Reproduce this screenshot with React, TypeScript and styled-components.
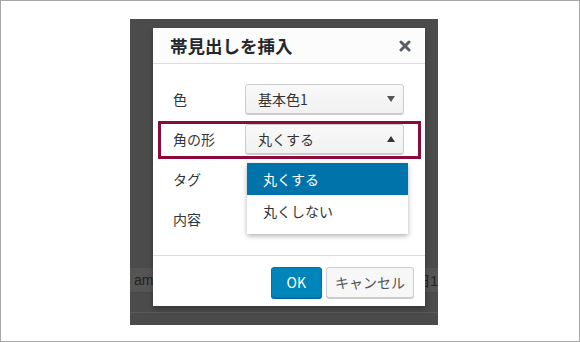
import styled, { createGlobalStyle } from "styled-components";

const GlobalStyle = createGlobalStyle`
    html, body {
        margin: 0;
        padding: 0;
        background: #ffffff;
    }
    body {
        font-family: "Noto Sans CJK JP", "Noto Sans", sans-serif;
    }
`;

const Frame = styled.div`
    box-sizing: border-box;
    width: 580px;
    height: 342px;
    border: 1px solid #a8a8a8;
    background: #ffffff;
    padding: 18px 0 0 129px;
`;

const Backdrop = styled.div`
    position: relative;
    width: 308px;
    height: 306px;
    background: #4b4b4b;
    display: flex;
    flex-direction: column;
    padding-top: 249px;
    box-sizing: border-box;
`;

const PageStrip = styled.div`
    height: 24px;
    background: #555555;
    border-bottom: 1px solid #474747;
    display: flex;
    align-items: center;
    justify-content: space-between;
    font-family: "Liberation Sans", "Noto Sans CJK JP", sans-serif;
    font-size: 14px;
    color: #222222;
`;

const PageLine = styled.div`
    margin-top: 19px;
    height: 1px;
    background: #5a5a5a;
`;

const Dialog = styled.div`
    position: absolute;
    left: 23px;
    top: 9px;
    width: 272px;
    height: 278px;
    background: #ffffff;
    box-shadow: 0 3px 6px rgba(0, 0, 0, 0.3);
    display: flex;
    flex-direction: column;
`;

const Header = styled.div`
    height: 36px;
    box-sizing: border-box;
    background: #fcfcfc;
    border-bottom: 1px solid #dddddd;
    display: flex;
    align-items: center;
    justify-content: space-between;
    padding: 0 14px 0 17px;
`;

const Title = styled.h1`
    margin: 0;
    font-size: 17.5px;
    font-weight: 700;
    color: #23282d;
    line-height: 1;
`;

const Close = styled.button`
    border: 0;
    background: none;
    padding: 0;
    width: 12px;
    height: 12px;
    display: flex;
    color: #555d66;
`;

const Body = styled.div`
    flex: 1;
    padding: 20px;
    display: flex;
    flex-direction: column;
    gap: 10px;
    border-bottom: 1px solid #dddddd;
`;

const Row = styled.div<{ $highlight?: boolean }>`
    position: relative;
    height: 30px;
    display: flex;
    align-items: center;

    &::after {
        content: "";
        display: ${(p) => (p.$highlight ? "block" : "none")};
        position: absolute;
        left: -15px;
        right: -16px;
        top: -3px;
        bottom: -5px;
        border: 3px solid #8c0a3c;
        pointer-events: none;
    }
`;

const Label = styled.label`
    width: 72px;
    font-size: 14px;
    color: #32373c;
    line-height: 1;
`;

const Select = styled.div`
    position: relative;
    width: 159px;
    height: 30px;
    box-sizing: border-box;
    border: 1px solid #cccccc;
    border-radius: 3px;
    background: linear-gradient(#f9f9f9, #f1f1f1);
    box-shadow: 0 1px 0 #cccccc;
    display: flex;
    align-items: center;
    justify-content: space-between;
    padding: 0 8px 0 12px;
    font-size: 14px;
    color: #333333;
`;

const Arrow = styled.span<{ $up?: boolean }>`
    width: 0;
    height: 0;
    border-left: 4px solid transparent;
    border-right: 4px solid transparent;
    ${(p) =>
        p.$up
            ? "border-bottom: 6px solid #32373c;"
            : "border-top: 6px solid #555555;"}
`;

const Menu = styled.ul`
    position: absolute;
    left: 1px;
    top: 38px;
    width: 161px;
    margin: 0;
    padding: 0 0 7px 0;
    list-style: none;
    background: #ffffff;
    box-shadow: 0 2px 5px rgba(0, 0, 0, 0.3);
    z-index: 2;
`;

const MenuItem = styled.li<{ $active?: boolean }>`
    height: 32px;
    display: flex;
    align-items: center;
    padding-left: 16px;
    font-size: 14px;
    background: ${(p) => (p.$active ? "#0073aa" : "#ffffff")};
    color: ${(p) => (p.$active ? "#ffffff" : "#333333")};
`;

const Footer = styled.div`
    height: 50px;
    display: flex;
    align-items: center;
    justify-content: flex-end;
    gap: 4px;
    padding: 0 11px 0 0;
`;

const Button = styled.button<{ $primary?: boolean }>`
    height: 31px;
    box-sizing: border-box;
    margin-top: 2px;
    border-radius: 3px;
    font-family: inherit;
    font-size: 14px;
    line-height: 1;
    padding: 0 ${(p) => (p.$primary ? "15px" : "8px")};
    border-width: 1px;
    border-style: solid;
    border-color: ${(p) => (p.$primary ? "#0073aa" : "#cccccc")};
    background: ${(p) => (p.$primary ? "#0085ba" : "#f7f7f7")};
    color: ${(p) => (p.$primary ? "#ffffff" : "#555555")};
    box-shadow: 0 1px 0 ${(p) => (p.$primary ? "#006799" : "#cccccc")};
    outline: none;
`;

const App = () => {
    return (
        <Frame>
            <GlobalStyle />
            <Backdrop>
                <PageStrip>
                    <span>&nbsp;am</span>
                    <span>日1</span>
                </PageStrip>
                <PageLine />
                <Dialog>
                    <Header>
                        <Title>帯見出しを挿入</Title>
                        <Close aria-label="閉じる">
                            <svg width="12" height="12" viewBox="0 0 12 12">
                                <path
                                    d="M2 2 L10 10 M10 2 L2 10"
                                    stroke="currentColor"
                                    strokeWidth="3"
                                    strokeLinecap="round"
                                />
                            </svg>
                        </Close>
                    </Header>
                    <Body>
                        <Row>
                            <Label>色</Label>
                            <Select>
                                基本色1
                                <Arrow />
                            </Select>
                        </Row>
                        <Row $highlight>
                            <Label>角の形</Label>
                            <Select>
                                丸くする
                                <Arrow $up />
                                <Menu>
                                    <MenuItem $active>丸くする</MenuItem>
                                    <MenuItem>丸くしない</MenuItem>
                                </Menu>
                            </Select>
                        </Row>
                        <Row>
                            <Label>タグ</Label>
                        </Row>
                        <Row>
                            <Label>内容</Label>
                        </Row>
                    </Body>
                    <Footer>
                        <Button $primary>OK</Button>
                        <Button>キャンセル</Button>
                    </Footer>
                </Dialog>
            </Backdrop>
        </Frame>
    );
};

export default App;
